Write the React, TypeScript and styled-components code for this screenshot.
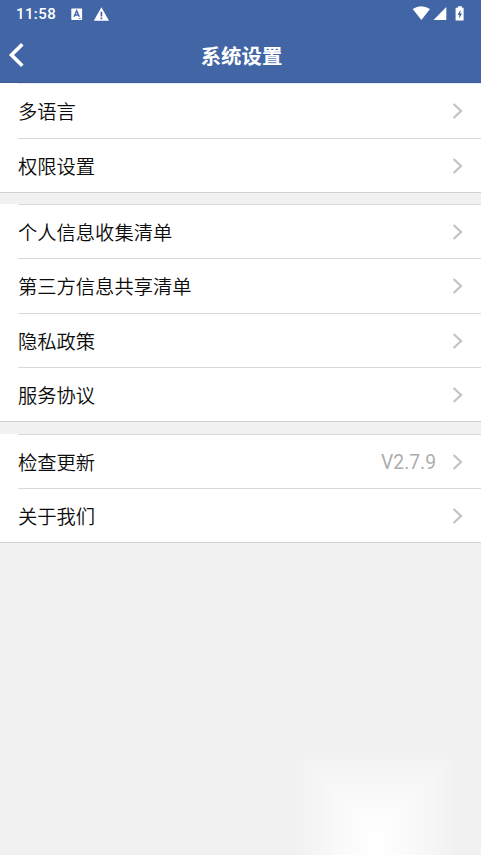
import React from 'react';
import styled, { createGlobalStyle } from 'styled-components';

const GlobalStyle = createGlobalStyle`
  * { box-sizing: border-box; }
  body {
    margin: 0;
    background: #f1f1f1;
    font-family: Roboto, "Noto Sans CJK SC", sans-serif;
  }
`;

const Screen = styled.div`
  position: relative;
  height: 855px;
  overflow: hidden;
  display: flex;
  flex-direction: column;
  background: #f1f1f1;
`;

const Header = styled.header`
  height: 83px;
  flex: none;
  background: #4265a5;
  border-bottom: 1px solid #3f5c94;
  color: #fff;
`;

const StatusBar = styled.div`
  height: 28px;
  display: flex;
  align-items: center;
  padding: 0 16px;
`;

const Clock = styled.span`
  width: 54px;
  font-size: 15px;
  font-weight: 500;
  letter-spacing: 0.4px;
  line-height: 28px;
`;

const StatusIcons = styled.div<{ $end?: boolean }>`
  display: flex;
  align-items: center;
  height: 28px;
  margin-left: ${p => (p.$end ? 'auto' : '0')};
`;

const NavBar = styled.div`
  height: 54px;
  display: grid;
  grid-template-columns: 48px 1fr 48px;
  align-items: center;
`;

const BackButton = styled.button`
  width: 48px;
  height: 54px;
  padding: 0 0 2px 8px;
  border: 0;
  background: none;
  display: flex;
  align-items: center;
`;

const Title = styled.h1`
  margin: 0;
  padding: 2px 0 0 2px;
  text-align: center;
  font-size: 20.4px;
  line-height: 54px;
  font-weight: 700;
`;

const Group = styled.section`
  flex: none;
  background: #fff;
  border-bottom: 1px solid #d2d2d2;
  margin-bottom: 11px;
  & + & { margin-bottom: 12px; }
`;

const Row = styled.div<{ $height: number; $line?: string }>`
  height: ${p => p.$height}px;
  margin-left: 18px;
  padding-right: 18px;
  border-top: 1px solid ${p => p.$line ?? '#d8d8d8'};
  display: flex;
  align-items: center;
`;

const Label = styled.span`
  flex: 1;
  color: #0c0c0c;
  font-size: 19.3px;
  font-weight: 350;
  line-height: 28px;
  padding-top: 4px;
`;

const Value = styled.span`
  margin-right: 16px;
  color: #adadad;
  font-size: 19.3px;
  line-height: 28px;
  padding-top: 2px;
`;

const Glow = styled.div`
  position: absolute;
  left: 296px;
  top: 752px;
  width: 160px;
  height: 103px;
  background-image:
    linear-gradient(90deg, #f1f1f1, #f9f9f9 26%, #fff 49%, #fff 51%, #f9f9f9 74%, #f1f1f1),
    linear-gradient(180deg, #f1f1f1, #f9f9f9 42%, #fff 82%);
  background-blend-mode: darken;
`;

const Chevron = () => (
  <svg width="11" height="18" viewBox="0 0 11 18" fill="none">
    <path d="M1.6 2 9 9 1.6 16" stroke="#c4c4c6" strokeWidth="2.3" />
  </svg>
);

interface Item { label: string; height: number; value?: string; line?: string }

const groups: Item[][] = [
  [
    { label: '多语言', height: 55, line: '#e2edff' },
    { label: '权限设置', height: 54 },
  ],
  [
    { label: '个人信息收集清单', height: 54 },
    { label: '第三方信息共享清单', height: 55 },
    { label: '隐私政策', height: 54 },
    { label: '服务协议', height: 54 },
  ],
  [
    { label: '检查更新', height: 54, value: 'V2.7.9' },
    { label: '关于我们', height: 54 },
  ],
];

export default function App() {
  return (
    <Screen>
      <GlobalStyle />
      <Header>
        <StatusBar>
          <Clock>11:58</Clock>
          <StatusIcons>
            <svg width="40" height="14" viewBox="0 0 40 14">
              <rect x="1.3" y="1.4" width="10.8" height="11.6" rx="0.8" fill="#fff" />
              <path d="M4 9.8 6.7 3.8 9.3 9.8M5 8h3.2" fill="none" stroke="#4265a5" strokeWidth="1.4" />
              <path d="M8.5 11.5h2.4" stroke="#4265a5" strokeWidth="0.7" />
              <path d="M31.4 0.2 39 13.7H23.8Z" fill="#fff" />
              <path d="M31.4 4.8v4.6M31.4 10.4v1.8" stroke="#4265a5" strokeWidth="1.7" />
            </svg>
          </StatusIcons>
          <StatusIcons $end>
            <svg width="53" height="16" viewBox="0 0 53 16">
              <path d="M0.7 3Q9.2 -2.4 18 3L9.4 14Z" fill="#fff" />
              <path d="M34.3 1V14H21.5Z" fill="#fff" />
              <path d="M45.9 0.2h4v1.5h1.7v12.9h-8V1.7h2.3Z" fill="#fff" />
              <path d="M48.4 4 45.6 9h1.6v3.5l2.8-5h-1.6Z" fill="#4265a5" />
            </svg>
          </StatusIcons>
        </StatusBar>
        <NavBar>
          <BackButton aria-label="返回">
            <svg width="17" height="26" viewBox="0 0 17 26" fill="none">
              <path d="M14.3 2.3 3.5 13 14.3 23.7" stroke="#fff" strokeWidth="3.6" />
            </svg>
          </BackButton>
          <Title>系统设置</Title>
        </NavBar>
      </Header>
      {groups.map((items, i) => (
        <Group key={i}>
          {items.map(item => (
            <Row key={item.label} $height={item.height} $line={item.line}>
              <Label>{item.label}</Label>
              {item.value && <Value>{item.value}</Value>}
              <Chevron />
            </Row>
          ))}
        </Group>
      ))}
      <Glow />
    </Screen>
  );
}
